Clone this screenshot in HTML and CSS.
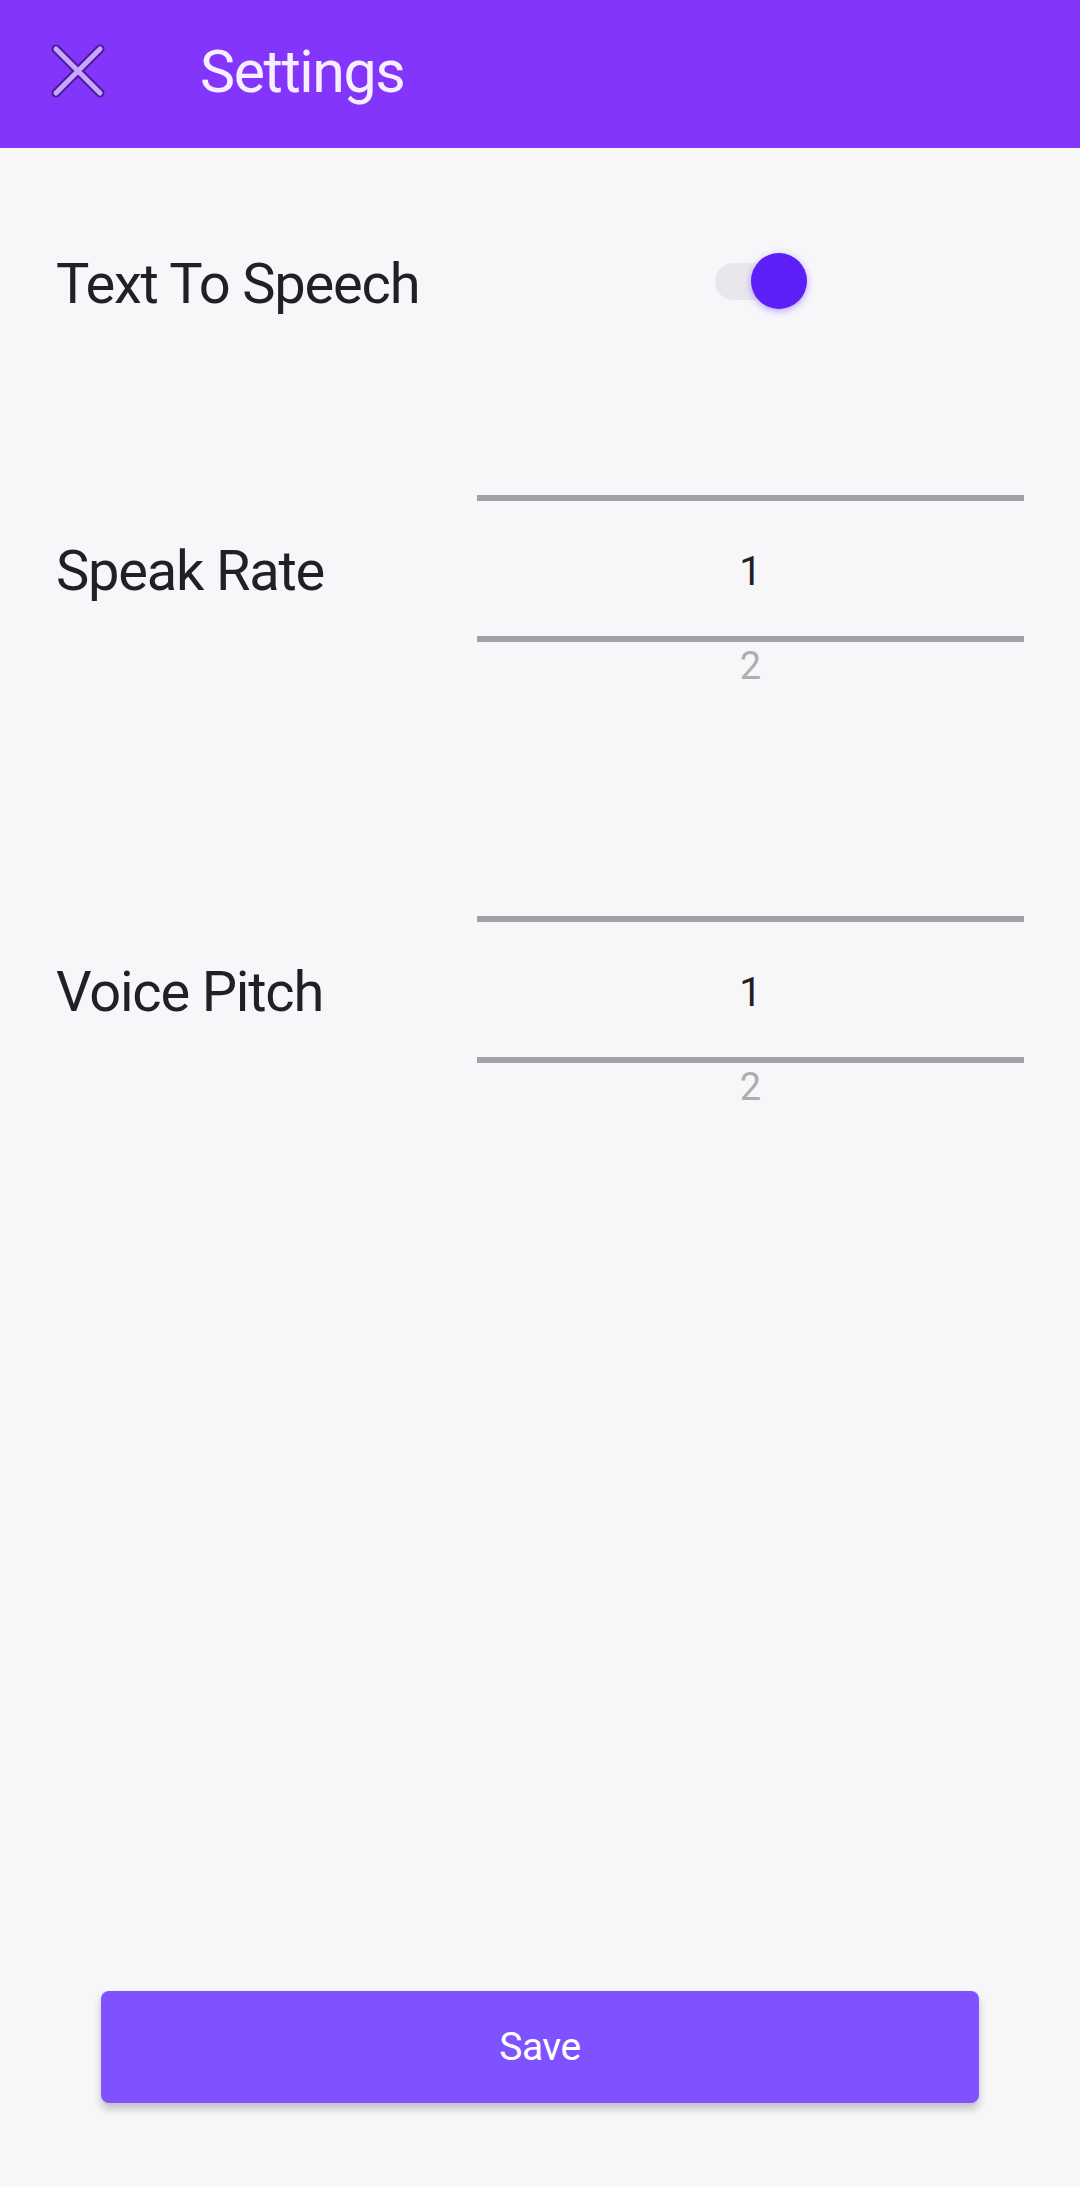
FILE: index.html
```html
<!DOCTYPE html>
<html lang="en">
<head>
<meta charset="UTF-8">
<meta name="viewport" content="width=device-width, initial-scale=1.0">
<title>Settings</title>
<link rel="stylesheet" href="styles.css">
</head>
<body>
<div class="app">
  <header class="topbar">
    <button class="close-btn" aria-label="Close">
      <svg width="56" height="56" viewBox="0 0 56 56">
        <path d="M6 6 L50 50 M50 6 L6 50" stroke="#4b1d97" stroke-width="9" stroke-linecap="round" fill="none"/>
        <path d="M6 6 L50 50 M50 6 L6 50" stroke="#c9a6ff" stroke-width="5" stroke-linecap="round" fill="none"/>
      </svg>
    </button>
    <h1 class="title">Settings</h1>
  </header>

  <main class="settings">
    <div class="row row-toggle">
      <span class="label">Text To Speech</span>
      <div class="switch on">
        <span class="track"></span>
        <span class="thumb"></span>
      </div>
    </div>

    <div class="row row-picker">
      <span class="label">Speak Rate</span>
      <div class="picker">
        <div class="picker-item"></div>
        <div class="picker-current">1</div>
        <div class="picker-item">2</div>
      </div>
    </div>

    <div class="row row-picker second">
      <span class="label">Voice Pitch</span>
      <div class="picker">
        <div class="picker-item"></div>
        <div class="picker-current">1</div>
        <div class="picker-item">2</div>
      </div>
    </div>
  </main>

  <footer class="actions">
    <button class="save-btn">Save</button>
  </footer>
</div>
</body>
</html>
```

FILE: styles.css
```css
* {
  box-sizing: border-box;
}
body {
  margin: 0;
  background: #f7f6f9;
  font-family: Roboto, "Noto Sans", sans-serif;
  color: #231f26;
}
.app {
  min-height: 100vh;
  display: flex;
  flex-direction: column;
}

/* top bar */
.topbar {
  height: 148px;
  background: #8435fb;
  display: flex;
  align-items: center;
  padding: 0 0 6px 50px;
}
.close-btn {
  background: none;
  border: 0;
  padding: 0;
  width: 56px;
  height: 56px;
  display: block;
  cursor: pointer;
}
.close-btn svg {
  display: block;
}
.title {
  margin: 0 0 0 94px;
  font-size: 59px;
  font-weight: 400;
  letter-spacing: -1.4px;
  color: #f7eeff;
}

/* rows */
.settings {
  flex: 1;
  padding: 74px 56px 0 56px;
}
.row {
  display: grid;
  grid-template-columns: 421px 1fr;
  align-items: center;
}
.label {
  font-size: 56px;
  letter-spacing: -1.2px;
  line-height: 1;
  padding-top: 4px;
  color: #231f26;
}
.row-toggle {
  height: 120px;
}
.row-picker {
  margin-top: 108px;
}
.row-picker.second {
  margin-top: 184px;
}

/* switch */
.switch {
  position: relative;
  width: 92px;
  height: 56px;
  margin-left: 238px;
  margin-top: -2px;
}
.track {
  display: block;
  width: 85px;
  height: 37px;
  margin-top: 10px;
  border-radius: 19px;
  background: #e9e7eb;
}
.thumb {
  position: absolute;
  right: 0;
  top: 0;
  width: 56px;
  height: 56px;
  border-radius: 50%;
  background: #5c1ff6;
  box-shadow: 0 2px 7px rgba(105, 50, 255, 0.45);
}

/* number picker */
.picker {
  text-align: center;
}
.picker-item {
  height: 45px;
  line-height: 45px;
  padding-top: 2px;
  font-size: 38px;
  color: #afadb2;
}
.picker-current {
  height: 147px;
  line-height: 135px;
  padding-top: 3px;
  font-size: 40px;
  color: #222024;
  border-top: 6px solid #a3a1a6;
  border-bottom: 6px solid #a3a1a6;
}

/* save */
.actions {
  padding: 0 101px 84px 101px;
}
.save-btn {
  display: block;
  width: 100%;
  height: 112px;
  border: 0;
  border-radius: 8px;
  background: #7f52ff;
  color: #ffffff;
  font-family: Roboto, "Noto Sans", sans-serif;
  font-size: 39px;
  letter-spacing: -0.5px;
  box-shadow: 0 6px 8px rgba(0, 0, 0, 0.22);
  cursor: pointer;
}
```
